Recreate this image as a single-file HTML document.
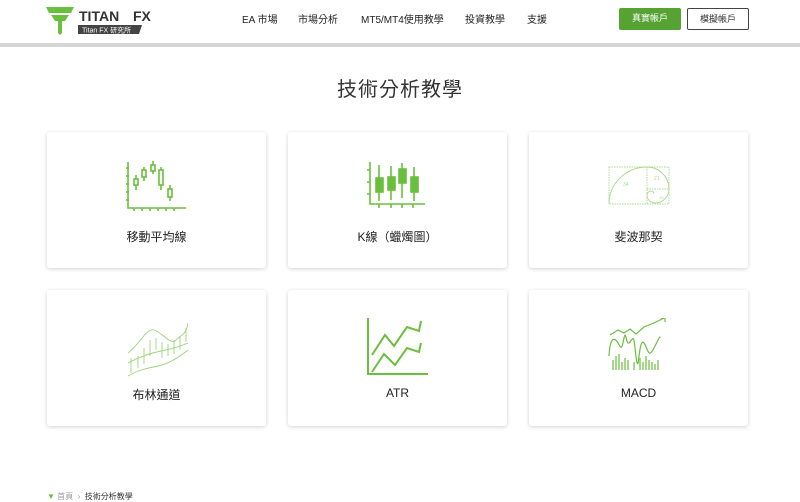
<!DOCTYPE html>
<html><head><meta charset="utf-8"><style>
*{margin:0;padding:0;box-sizing:border-box}
body{width:800px;height:500px;background:#fff;font-family:"Liberation Sans","Noto Sans CJK TC",sans-serif;color:#333;position:relative;overflow:hidden}
.hdr{position:absolute;left:0;top:0;width:800px;height:47px;border-bottom:4px solid #d6d6d6;background:#fff}
.nav{position:absolute;top:11px;font-size:10px;color:#222}
.btn{position:absolute;top:8px;height:22px;width:62px;font-size:9px;text-align:center;line-height:20px;border-radius:2px}
h1{position:absolute;top:73px;width:800px;text-align:center;font-size:20px;font-weight:normal;color:#333;letter-spacing:1px}
.card{position:absolute;width:219px;height:136px;background:#fff;border-radius:3px;box-shadow:0 1px 4px rgba(0,0,0,.18)}
.card svg{position:absolute;left:79px;top:28px}
.card .l{position:absolute;top:96px;width:100%;text-align:center;font-size:12px;color:#222}
.bc{position:absolute;top:491px;left:47px;font-size:8px;color:#999}
</style></head><body>
<div class="hdr">
 <svg style="position:absolute;left:46px;top:7px" width="112" height="28" viewBox="0 0 112 28">
  <path d="M0 0h28l-3 6H3z" fill="#6abf3e"/><path d="M5 8h18l-4 6h-3v12l-2 2-2-2V14H9z" fill="#6abf3e"/>
  <text x="33" y="14" font-family="Liberation Sans" font-weight="bold" font-size="14" fill="#333">TITAN</text>
  <text x="87" y="14" font-family="Liberation Sans" font-weight="bold" font-size="14" fill="#333">FX</text>
  <path d="M32 18h64l-3 9H32z" fill="#444"/>
  <text x="36" y="25.5" font-size="7" fill="#fff" font-family="Liberation Sans,Noto Sans CJK TC">Titan FX 研究所</text>
 </svg>
 <div class="nav" style="left:242px">EA 市場</div>
 <div class="nav" style="left:298px">市場分析</div>
 <div class="nav" style="left:361px">MT5/MT4使用教學</div>
 <div class="nav" style="left:465px">投資教學</div>
 <div class="nav" style="left:527px">支援</div>
 <div class="btn" style="left:619px;background:#56a334;color:#fff">真實帳戶</div>
 <div class="btn" style="left:687px;border:1px solid #444;color:#333">模擬帳戶</div>
</div>
<h1>技術分析教學</h1>

<div class="card" style="left:47px;top:132px"><svg width="62" height="52" viewBox="0 0 62 52" fill="none" stroke="#6abf3e" stroke-width="1.6">
 <path d="M2 2v46h58"/><path d="M0 8h3M0 16h3M0 24h3M0 32h3M0 40h3M8 48v3M16 48v3M24 48v3M32 48v3M40 48v3M48 48v3"/>
 <rect x="8" y="19" width="4" height="6"/><path d="M10 15v4M10 25v5"/><rect x="16" y="10" width="4" height="7"/><path d="M18 7v3M18 17v4"/>
 <rect x="25" y="5" width="4" height="6"/><path d="M27 1v4M27 11v3"/><rect x="33" y="10" width="4" height="15"/><path d="M35 7v3M35 25v5"/><rect x="42" y="29" width="4" height="8"/><path d="M44 25v4M44 37v4"/></svg><div class="l">移動平均線</div></div>

<div class="card" style="left:288px;top:132px"><svg width="62" height="52" viewBox="0 0 62 52" fill="none" stroke="#6abf3e" stroke-width="1.6">
 <path d="M3 2v42h55"/><path d="M0 10h3M0 22h3M0 34h3M12 44v4M24 44v4M35 44v4M46 44v4"/>
 <g fill="#6abf3e"><rect x="9" y="18" width="7" height="14"/><rect x="21" y="17" width="7" height="13"/><rect x="32" y="9" width="7" height="14"/><rect x="44" y="17" width="7" height="15"/></g>
 <path d="M12 5v36M24 6v34M35 3v35M47 7v34"/></svg><div class="l">K線（蠟燭圖）</div></div>

<div class="card" style="left:529px;top:132px"><svg width="62" height="52" viewBox="0 0 62 52" fill="none" stroke="#a9d98c" stroke-width="0.9" style="left:79px;top:34px">
 <rect x="1" y="1" width="60" height="37" stroke-dasharray="1.5 1"/><path d="M1 38A38 37 0 0 1 39 1A22 22 0 0 1 61 23A14 14 0 0 1 47 37A8 8 0 0 1 39 29A4 4 0 0 1 43 25A3 3 0 0 1 46 28"/><path d="M39 1v37M39 23h22" stroke-dasharray="1.5 1"/>
 <text x="15" y="20" font-size="5" fill="#a9d98c" stroke="none">34</text><text x="46" y="14" font-size="5" fill="#a9d98c" stroke="none">21</text><text x="51" y="33" font-size="4" fill="#a9d98c" stroke="none">13</text></svg><div class="l">斐波那契</div></div>

<div class="card" style="left:47px;top:290px"><svg width="62" height="60" viewBox="0 0 62 60" fill="none" stroke="#9cd47c" stroke-width="0.9">
 <path d="M2 35C15 25 20 10 28 12S45 28 50 22 60 18 62 5"/><path d="M2 45C15 38 25 35 35 33S55 28 62 25"/><path d="M2 58C12 52 22 50 32 48S52 40 62 32"/><path d="M5 40v15M12 38v12M18 30v16M24 22v16M30 20v12M36 24v16M42 26v12M48 22v14M54 18v14M60 10v14"/></svg><div class="l">布林通道</div></div>

<div class="card" style="left:288px;top:290px"><svg width="62" height="60" viewBox="0 0 62 60" fill="none" stroke="#6abf3e" stroke-width="2">
 <path d="M1 0v56h60"/><path d="M5 37L18 17 27 28 40 9 52 13 54 3"/><path d="M5 54L17 36 28 47 40 30 52 34 54 25"/></svg><div class="l">ATR</div></div>

<div class="card" style="left:529px;top:290px"><svg width="62" height="60" viewBox="0 0 62 60" fill="none" stroke="#6abf3e" stroke-width="1.2">
 <path d="M2 17L10 12 16 15 22 11 28 16 36 9 46 5 56 0"/><path d="M53 0h4v4"/><path d="M1 38C2 20 6 18 10 25S14 30 16 20 18 30 22 24 26 20 27 30 29 48 30 45 32 20 36 25 40 42 46 30 52 18 52 20"/>
 <path d="M5 52v-10M8 52v-14M11 52v-16M14 52v-8M17 52v-12M20 52v-10M26 52v-8M32 52v-12M35 52v-8M38 52v-14M41 52v-10M44 52v-8M47 52v-6M50 52v-10"/></svg><div class="l">MACD</div></div>

<div class="bc"><span style="color:#6abf3e">▼</span> 首頁 &nbsp;›&nbsp; <span style="color:#333">技術分析教學</span></div>
</body></html>
